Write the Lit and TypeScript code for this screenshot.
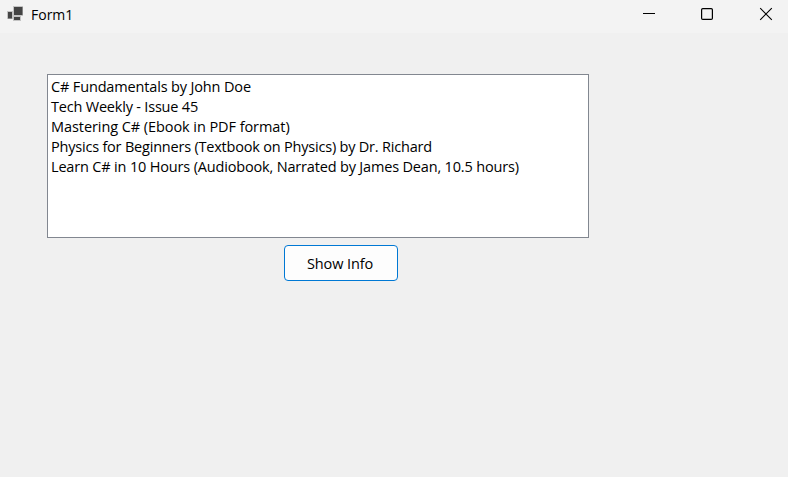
import { LitElement, html, css } from "lit";
import { customElement } from "lit/decorators.js";

interface Item {
  text: string;
  spacing: number;
}

const ITEMS: Item[] = [
  { text: "C# Fundamentals by John Doe", spacing: -0.15 },
  { text: "Tech Weekly - Issue 45", spacing: -0.2 },
  { text: "Mastering C# (Ebook in PDF format)", spacing: -0.07 },
  { text: "Physics for Beginners (Textbook on Physics) by Dr. Richard", spacing: -0.205 },
  { text: "Learn C# in 10 Hours (Audiobook, Narrated by James Dean, 10.5 hours)", spacing: -0.17 },
];

@customElement("title-bar")
export class TitleBar extends LitElement {
  static styles = css`
    :host {
      display: flex;
      height: 33px;
      background: #f3f3f3;
      font-size: 14px;
      color: #000;
    }
    .icon {
      margin: 5px 0 0 6px;
      width: 18px;
      height: 18px;
    }
    .title {
      margin-left: 7px;
      line-height: 29px;
      flex: 1;
    }
    .controls {
      display: flex;
    }
    .control {
      width: 58px;
      height: 28px;
      display: block;
    }
  `;
  render() {
    return html`
      <svg class="icon" viewBox="0 0 18 18">
        <path fill="#c4c4c4" d="M7 1h10v10H7zM1 6h6v8H1zM7 11h8v5H7z" />
        <path fill="#444" d="M8 2h8.5v8H8zM2 7h4v6.5H2zM8 12h6v3H8z" />
      </svg>
      <span class="title">Form1</span>
      <div class="controls">
        <svg class="control" viewBox="0 0 58 28">
          <path d="M29 13.5H41" stroke="#000" />
        </svg>
        <svg class="control" viewBox="0 0 58 28">
          <rect x="29.6" y="8.6" width="10.8" height="10.8" rx="1.2" fill="none" stroke="#000" stroke-width="1.2" />
        </svg>
        <svg class="control" viewBox="0 0 58 28">
          <path d="M30.2 8.2L41.8 19.8M41.8 8.2L30.2 19.8" stroke="#000" stroke-width="1.1" />
        </svg>
      </div>
    `;
  }
}

@customElement("app-root")
export class AppRoot extends LitElement {
  static styles = css`
    :host {
      display: block;
      height: 477px;
      overflow: hidden;
      background: #f0f0f0;
      font-family: "Open Sans", "Noto Sans", sans-serif;
      font-size: 14.5px;
      color: #000;
    }
    .form {
      display: flex;
      flex-direction: column;
      align-items: center;
      width: 542px;
      margin: 41px 0 0 47px;
    }
    .list {
      box-sizing: border-box;
      width: 542px;
      height: 164px;
      margin: 0;
      padding: 2px 3px;
      list-style: none;
      background: #fff;
      border: 1px solid #828790;
    }
    .item {
      height: 20px;
      line-height: 20px;
      white-space: pre;
    }
    .button {
      box-sizing: border-box;
      width: 114px;
      height: 36px;
      margin: 7px 0 0 46px;
      padding: 0 2px 0 0;
      align-self: center;
      font: inherit;
      letter-spacing: -0.1px;
      color: inherit;
      background: #fdfdfd;
      border: 1px solid #0078d4;
      border-radius: 4px;
    }
  `;
  render() {
    return html`
      <title-bar></title-bar>
      <div class="form">
        <ul class="list">
          ${ITEMS.map(
            (i) => html`<li class="item"><span style="letter-spacing:${i.spacing}px">${i.text}</span></li>`
          )}
        </ul>
        <button class="button">Show Info</button>
      </div>
    `;
  }
}
